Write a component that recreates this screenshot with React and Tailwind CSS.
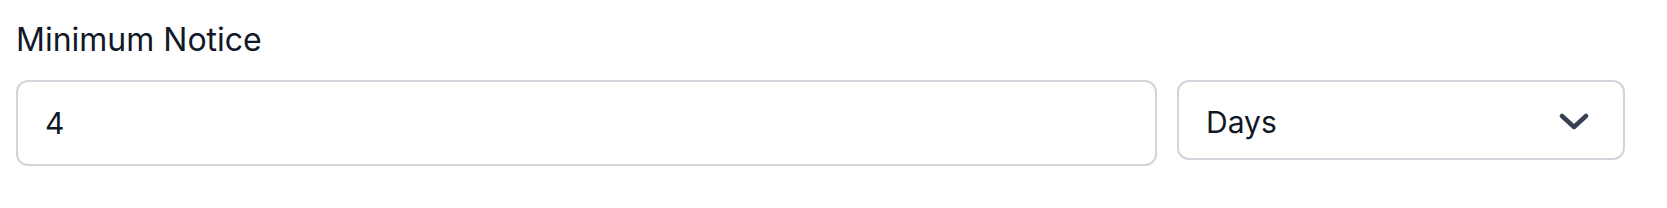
import React from 'react';

export default function App() {
  return (
    <div className="w-[1667px] h-[208px] bg-white px-4 pt-5 font-['Inter',sans-serif]">
      <label className="block text-[32px] leading-[40px] font-normal text-[#111827]">Minimum Notice</label>
      <div className="mt-5 flex items-start gap-5">
        <div className="w-[1141px] h-[86px] flex items-center border-2 border-[#d1d5db] rounded-xl px-[27px] text-[30px] text-[#111827]">
          4
        </div>
        <div className="w-[448px] h-[80px] flex items-center justify-between border-2 border-[#d1d5db] rounded-xl pl-[27px] pr-[34px] pt-1 text-[30px] text-[#111827]">
          <span>Days</span>
          <svg width="30" height="18" viewBox="0 0 30 18" fill="none">
            <polyline points="3,3 15,14 27,3" stroke="#374151" strokeWidth="4.5" strokeLinecap="round" strokeLinejoin="round" />
          </svg>
        </div>
      </div>
    </div>
  );
}
